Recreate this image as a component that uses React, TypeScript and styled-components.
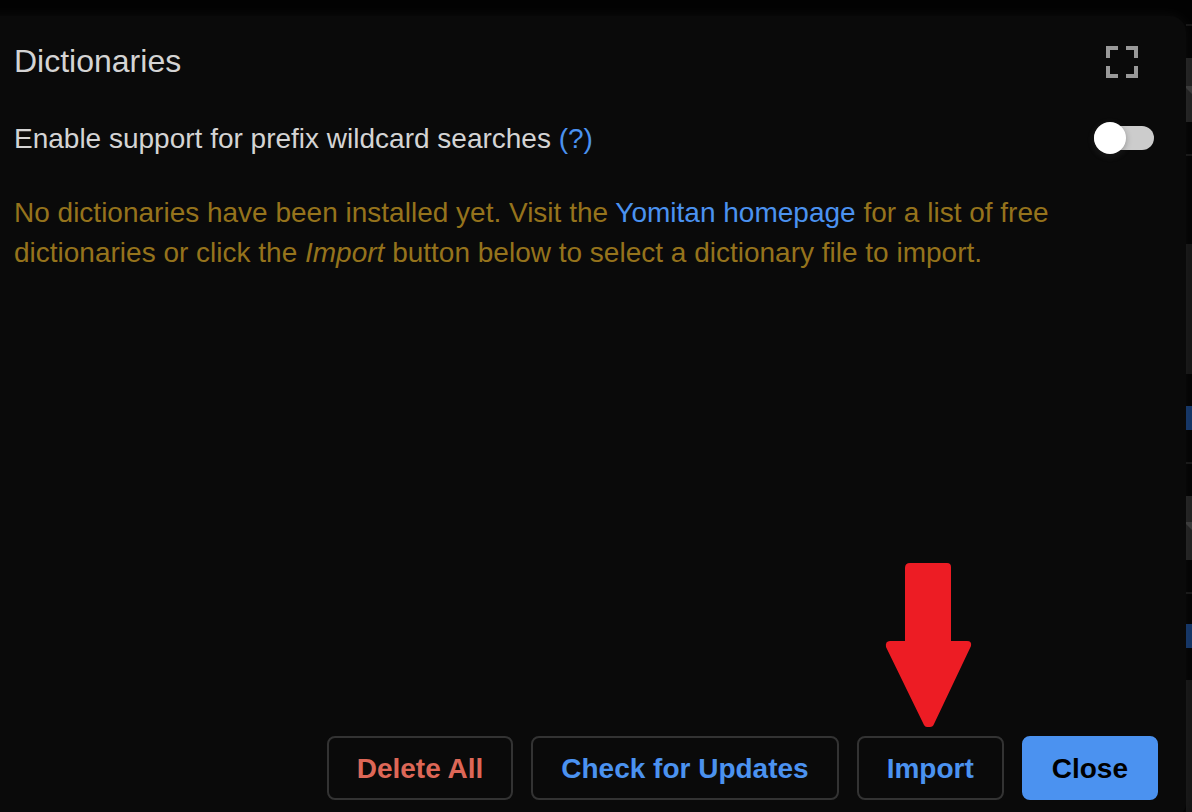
import React, { useState } from 'react';
import styled, { createGlobalStyle } from 'styled-components';

const GlobalStyle = createGlobalStyle`
  *, *::before, *::after { box-sizing: border-box; }
  html, body { height: 100%; }
  body {
    margin: 0;
    overflow: hidden;
    background: #010101;
    color: #d4d4d4;
    font-family: "Liberation Sans", Arial, Helvetica, sans-serif;
    font-size: 28px;
    line-height: 40px;
  }
`;

/* The dimmed settings page shows in a sliver past the dialog's right edge. */
const Screen = styled.div`
  display: grid;
  grid-template-columns: minmax(0, 1fr) 6px;
  height: 100vh;
  overflow: hidden;
  background: #020202;
`;

/* The dialog's left side runs out of the window, as does its lower edge. */
const Dialog = styled.section`
  display: flex;
  flex-direction: column;
  margin: 16px 0 -4px -24px;
  padding: 22px 14px 16px 38px;
  border-radius: 0 16px 12px 0;
  background: #0a0a0a;
  box-shadow: 0 0 16px rgba(255, 255, 255, 0.05);
  z-index: 0;
`;

const Header = styled.header`
  display: flex;
  align-items: center;
  justify-content: space-between;
  height: 48px;
  padding-right: 32px;
`;

const Title = styled.h1`
  margin: 0;
  padding-bottom: 2px;
  font-size: 32px;
  font-weight: 400;
  line-height: 46px;
`;

const IconButton = styled.button`
  display: flex;
  padding: 0;
  border: 0;
  background: none;
  color: #999999;
  cursor: pointer;
`;

const SettingRow = styled.div`
  display: flex;
  align-items: center;
  justify-content: space-between;
  margin-top: 31px;
  padding-right: 18px;
`;

const SettingText = styled.div`
  padding-top: 2px;
`;

const Link = styled.a`
  color: #4b92f0;
  text-decoration: none;
`;

const Switch = styled.input`
  appearance: none;
  position: relative;
  display: flex;
  flex: none;
  align-items: center;
  width: 60px;
  height: 32px;
  margin: 0;
  cursor: pointer;

  &::before {
    content: "";
    width: 60px;
    height: 24px;
    border-radius: 12px;
    background: #cccccc;
  }

  &::after {
    content: "";
    position: absolute;
    left: 0;
    width: 32px;
    height: 32px;
    border-radius: 50%;
    background: #ffffff;
    box-shadow: 0 2px 6px rgba(0, 0, 0, 0.3), 0 2px 8px rgba(255, 255, 255, 0.1);
  }

  &:checked::before { background: #4b92f0; }
  &:checked::after { left: 28px; }
`;

const Warning = styled.p`
  margin: 34px 0 0;
  max-width: 1080px;
  color: #95731c;
`;

const Footer = styled.footer`
  display: flex;
  justify-content: flex-end;
  gap: 18px;
  margin-top: auto;
  padding-right: 14px;
`;

const Button = styled.button<{ $tone?: 'danger' | 'primary' }>`
  height: 64px;
  padding: 2px 28px 0;
  border: 2px solid ${(p) => (p.$tone === 'primary' ? '#4b92f0' : '#333333')};
  border-radius: 8px;
  background: ${(p) => (p.$tone === 'primary' ? '#4b92f0' : 'transparent')};
  color: ${(p) =>
    p.$tone === 'primary' ? '#000000' : p.$tone === 'danger' ? '#dd6757' : '#4b92f0'};
  font: inherit;
  font-weight: 700;
  white-space: nowrap;
  cursor: pointer;
`;

const Pointed = styled.div`
  position: relative;
`;

const Arrow = styled.svg`
  position: absolute;
  bottom: calc(100% + 8px);
  left: 28px;
  pointer-events: none;
`;

const PageEdge = styled.div`
  display: flex;
  flex-direction: column;
  overflow: hidden;
`;

const fills = {
  gap: 'transparent',
  rule: '#161616',
  field: '#202020',
  panel: '#141414',
  accent: '#123364',
};

const Slice = styled.div<{ $kind: keyof typeof fills; $h: number }>`
  flex: none;
  height: ${(p) => p.$h}px;
  background: ${(p) => fills[p.$kind]};
`;

const Field = styled(Slice)<{ $top: number }>`
  padding-top: ${(p) => p.$top}px;

  svg { display: block; }
`;

function DropField({ top }: { top: number }) {
  return (
    <Field $kind="field" $h={64} $top={top}>
      <svg width="6" height="8" viewBox="0 0 6 8" aria-hidden="true">
        <path d="M0 0H6V8L0 2Z" fill="#383838" />
      </svg>
    </Field>
  );
}

export default function App() {
  const [prefix, setPrefix] = useState(false);
  return (
    <>
      <GlobalStyle />
      <Screen>
        <Dialog role="dialog" aria-labelledby="dialog-title">
          <Header>
            <Title id="dialog-title">Dictionaries</Title>
            <IconButton type="button" aria-label="Expand">
              <svg width="36" height="32" viewBox="0 0 36 32" fill="currentColor" aria-hidden="true">
                <path d="M2 0h12v4H6v8H2zM22 0h12v12h-4V4h-8zM2 20h4v8h8v4H2zM30 20h4v12H22v-4h8z" />
              </svg>
            </IconButton>
          </Header>
          <SettingRow>
            <SettingText>
              <label htmlFor="prefix">Enable support for prefix wildcard searches</label>{' '}
              <Link href="#help">(?)</Link>
            </SettingText>
            <Switch
              id="prefix"
              type="checkbox"
              role="switch"
              checked={prefix}
              onChange={(e) => setPrefix(e.target.checked)}
            />
          </SettingRow>
          <Warning>
            No dictionaries have been installed yet. Visit the{' '}
            <Link href="#homepage">Yomitan homepage</Link> for a list of free dictionaries or click
            the <em>Import</em> button below to select a dictionary file to import.
          </Warning>
          <Footer>
            <Button type="button" $tone="danger">Delete All</Button>
            <Button type="button">Check for Updates</Button>
            <Pointed>
              <Button type="button">Import</Button>
              <Arrow width="88" height="166" viewBox="0 0 88 166" aria-hidden="true">
                <path
                  d="M25 1H62Q66 1 66 5V79H82Q87 79 86 84L49 162Q48 165 45 165H42Q40 165 39 163L1 85Q0 79 5 79H20V6Q20 1 25 1Z"
                  fill="#ed1c24"
                />
              </Arrow>
            </Pointed>
            <Button type="button" $tone="primary">Close</Button>
          </Footer>
        </Dialog>
        <PageEdge aria-hidden="true">
          <Slice $kind="gap" $h={24} />
          <Slice $kind="rule" $h={2} />
          <Slice $kind="gap" $h={32} />
          <DropField top={28} />
          <Slice $kind="gap" $h={32} />
          <Slice $kind="rule" $h={2} />
          <Slice $kind="gap" $h={88} />
          <Slice $kind="panel" $h={130} />
          <Slice $kind="gap" $h={32} />
          <Slice $kind="accent" $h={24} />
          <Slice $kind="gap" $h={32} />
          <Slice $kind="rule" $h={2} />
          <Slice $kind="gap" $h={32} />
          <DropField top={26} />
          <Slice $kind="gap" $h={32} />
          <Slice $kind="rule" $h={2} />
          <Slice $kind="gap" $h={30} />
          <Slice $kind="accent" $h={24} />
          <Slice $kind="gap" $h={32} />
          <Slice $kind="panel" $h={180} />
        </PageEdge>
      </Screen>
    </>
  );
}
